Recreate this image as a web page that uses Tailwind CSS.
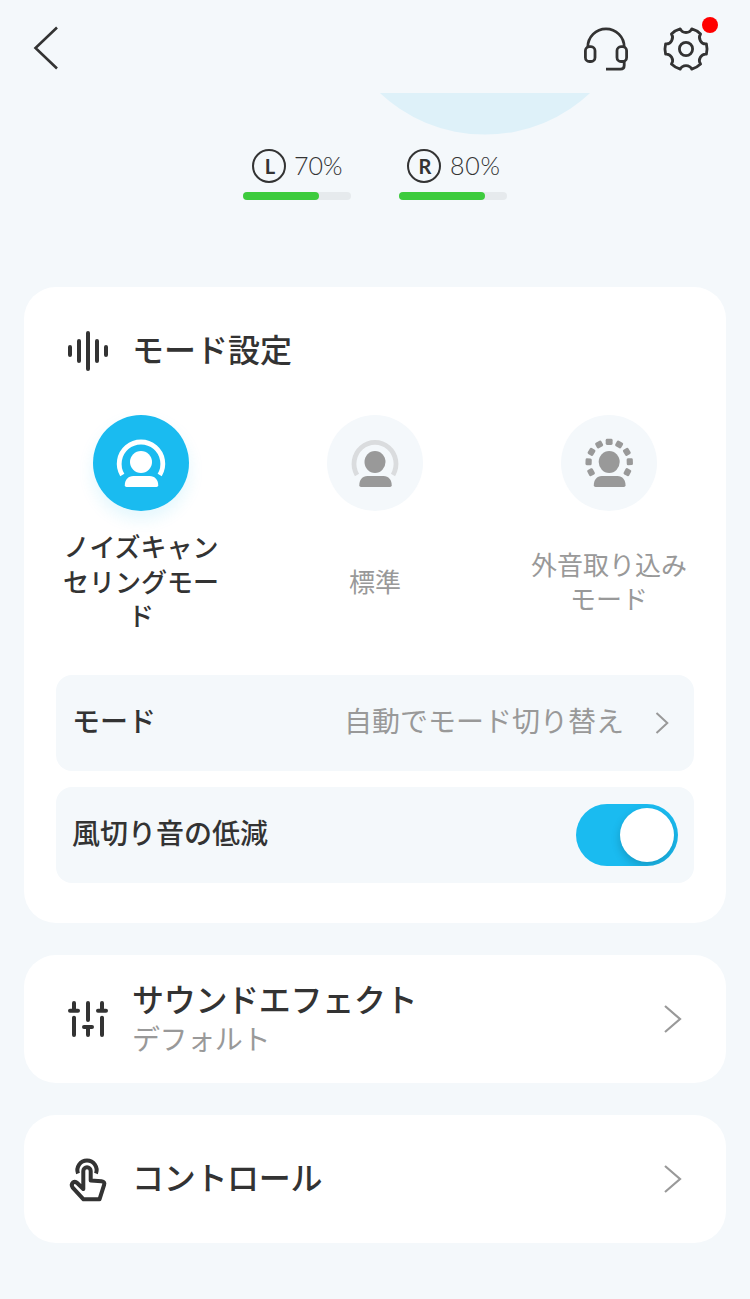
<!DOCTYPE html>
<html lang="ja">
<head>
<meta charset="utf-8">
<title>モード設定</title>
<script src="https://cdn.jsdelivr.net/npm/@tailwindcss/browser@4"></script>
</head>
<body class="bg-[#f4f8fb] font-['Noto_Sans_CJK_JP',sans-serif] text-[#333333]">
<div class="flex h-[1299px] w-[750px] flex-col overflow-hidden">
  <header class="flex h-[93px] shrink-0 items-start justify-between pr-7 pl-6">
    <svg class="h-[93px] w-12" viewBox="24 0 48 93" fill="none" stroke="#333" stroke-width="2.6"><path d="M57 27.5 35.5 48 57 68.5"/></svg>
    <div class="flex">
      <svg class="h-[93px] w-[60px]" viewBox="576 0 60 93" fill="none" stroke="#333" stroke-width="2.8">
        <path d="M587.8 47A18.2 18.2 0 0 1 624.2 47M624.2 61V65.5Q624.2 69.2 620.5 69.2H606"/>
        <rect x="585.4" y="46.7" width="9.6" height="14.8" rx="4"/><rect x="617" y="46.7" width="9.6" height="14.8" rx="4"/>
      </svg>
      <svg class="h-[93px] w-[86px]" viewBox="636 0 86 93" fill="none" stroke="#333" stroke-width="2.8">
        <g transform="translate(686 49)" stroke-linejoin="round">
          <path d="M-5.8-20.2C-3.6-15.3 3.6-15.3 5.8-20.2A21 21 0 0 1 14.6-15.1C11.5-10.8 15.1-4.5 20.4-5.1A21 21 0 0 1 20.4 5.1C15.1 4.500 11.5 10.8 14.6 15.1A21 21 0 0 1 5.8 20.2C3.6 15.3-3.6 15.3-5.8 20.2A21 21 0 0 1-14.6 15.1C-11.5 10.8-15.1 4.500-20.4 5.1A21 21 0 0 1-20.4-5.1C-15.1-4.500-11.5-10.8-14.6-15.1A21 21 0 0 1-5.8-20.2Z"/>
          <circle r="6.6"/>
        </g>
        <circle cx="710" cy="25" r="8" fill="#f00" stroke="none"/>
      </svg>
    </div>
  </header>

  <section class="h-[194px] shrink-0">
    <svg class="block h-[50px] w-full" viewBox="0 93 750 50"><circle cx="485" cy="-19" r="153.6" fill="#def1f9"/></svg>
    <div class="flex gap-12 pl-[243px]">
      <div class="w-[108px]">
        <div class="flex h-[49px] items-center gap-2 pb-[3px] pl-[9px]">
          <span class="flex size-[34px] items-center justify-center rounded-full border-2 border-[#333] pl-0.5 font-['Lato',sans-serif] text-[20px] font-bold">L</span>
          <span class="font-['Lato',sans-serif] text-[25px] font-light">70%</span>
        </div>
        <div class="h-2 rounded-full bg-[#e6eaed]"><div class="h-2 rounded-full bg-[#3dcb3d]" style="width:70%"></div></div>
      </div>
      <div class="w-[108px]">
        <div class="flex h-[49px] items-center gap-[9px] pb-[3px] pl-2">
          <span class="flex size-[34px] items-center justify-center rounded-full border-2 border-[#333] pl-0.5 font-['Lato',sans-serif] text-[20px] font-bold">R</span>
          <span class="font-['Lato',sans-serif] text-[25px] font-light tracking-[0.8px]">80%</span>
        </div>
        <div class="h-2 rounded-full bg-[#e6eaed]"><div class="h-2 rounded-full bg-[#3dcb3d]" style="width:80%"></div></div>
      </div>
    </div>
  </section>

  <main class="flex flex-col gap-8 px-6">
    <section class="h-[636px] rounded-[32px] bg-white px-8 pt-9">
      <div class="flex h-14 items-center gap-6 pl-3">
        <svg class="h-10 w-10" viewBox="68 331 40 40" stroke="#333" stroke-width="4" stroke-linecap="round"><path d="M70 347V355M79 341V361M88 333V369M97 341V361M106 347V355"/></svg>
        <h1 class="pb-1.5 text-[32px] leading-[48px] font-medium">モード設定</h1>
      </div>
      <div class="mt-9 flex justify-between">
        <div class="flex w-[170px] flex-col items-center">
          <div class="size-24 rounded-full bg-[#1abbf0] shadow-[0_8px_16px_rgba(26,187,240,0.12)]">
            <svg class="size-24" viewBox="93 415 96 96" fill="#fff"><path d="M122.300 475A21.800 21.800 0 1 1 159.700 475" fill="none" stroke="#fff" stroke-width="4.800"/><circle cx="141" cy="462" r="11"/><path d="M126.500 487Q124.800 487 124.800 485.200C124.800 480 128 476 133.500 476H149.500C155 476 158.200 480 158.200 485.200Q158.200 487 156.500 487Z"/></svg>
          </div>
          <div class="mt-[17px] flex h-[106px] w-[156px] items-center justify-center text-center text-[26px] leading-[34.500px] font-medium"><span>ノイズキャン<br>セリングモー<br>ド</span></div>
        </div>
        <div class="flex w-[170px] flex-col items-center">
          <div class="size-24 rounded-full bg-[#f4f8fb]">
            <svg class="size-24" viewBox="327 415 96 96" fill="#999"><path d="M357 475A21 21.500 0 1 1 393 475" fill="none" stroke="#dadcde" stroke-width="4.800"/><ellipse cx="375" cy="462" rx="10.500" ry="11"/><path d="M361 487Q359.300 487 359.300 485.200C359.300 480 362.300 476 367.500 476H383.500C388.700 476 391.700 480 391.700 485.200Q391.700 487 390 487Z"/></svg>
          </div>
          <div class="mt-[17px] flex h-[106px] items-center justify-center text-center text-[26px] leading-[34px] text-[#999]">標準</div>
        </div>
        <div class="flex w-[170px] flex-col items-center">
          <div class="size-24 rounded-full bg-[#f4f8fb]">
            <svg class="size-24" viewBox="561 415 96 96" fill="#999">
              <ellipse cx="609.200" cy="462" rx="10.500" ry="11"/><path d="M595.500 487Q593.800 487 593.800 485.200C593.800 480 596.800 476 601.800 476H617.500C622.500 476 625.500 480 625.500 485.200Q625.500 487 623.800 487Z"/>
              <rect x="605.700" y="438.800" width="6.900" height="6.200" rx="1.400"/>
              <rect x="605.700" y="438.800" width="6.900" height="6.200" rx="1.400" transform="rotate(29 609.200 462.500)"/>
              <rect x="605.700" y="438.800" width="6.900" height="6.200" rx="1.400" transform="rotate(-29 609.200 462.500)"/>
              <rect x="605.700" y="438.800" width="6.900" height="6.200" rx="1.400" transform="rotate(59 609.200 462.500)"/>
              <rect x="605.700" y="438.800" width="6.900" height="6.200" rx="1.400" transform="rotate(-59 609.200 462.500)"/>
              <rect x="605.700" y="438.800" width="6.900" height="6.200" rx="1.400" transform="rotate(88 609.200 462.500)"/>
              <rect x="605.700" y="438.800" width="6.900" height="6.200" rx="1.400" transform="rotate(-88 609.200 462.500)"/>
              <rect x="605.700" y="438.800" width="6.900" height="6.200" rx="1.400" transform="rotate(118 609.200 462.500)"/>
              <rect x="605.700" y="438.800" width="6.900" height="6.200" rx="1.400" transform="rotate(-118 609.200 462.500)"/>
            </svg>
          </div>
          <div class="mt-[17px] flex h-[106px] items-center justify-center text-center text-[26px] leading-[34px] text-[#999]"><span>外音取り込み<br>モード</span></div>
        </div>
      </div>
      <div class="mt-[41px] flex h-24 items-center rounded-2xl bg-[#f4f8fb] pr-6 pl-4">
        <span class="grow pb-1.5 text-[28px] font-medium">モード</span>
        <span class="pb-1.5 text-[28px] text-[#999]">自動でモード切り替え</span>
        <svg class="ml-7 h-6 w-[18px]" viewBox="652 711 18 24" fill="none" stroke="#999" stroke-width="2"><path d="M656.500 713 667.300 723 656.500 733"/></svg>
      </div>
      <div class="mt-4 flex h-24 items-center justify-between rounded-2xl bg-[#f4f8fb] px-4">
        <span class="pb-1.5 text-[28px] font-medium">風切り音の低減</span>
        <div class="flex h-[62px] w-[102px] items-center justify-end overflow-hidden rounded-full bg-[#1abbf0] pr-1"><div class="size-[54px] rounded-full bg-white shadow-[0_4px_10px_rgba(0,0,0,0.18)]"></div></div>
      </div>
    </section>

    <section class="flex h-32 items-center rounded-[32px] bg-white pr-11 pl-[42px]">
      <svg class="h-11 w-11 shrink-0" viewBox="66 997 44 44" fill="none" stroke="#333" stroke-width="4" stroke-linecap="round"><path d="M74 1003V1010.700M70 1010.700H78M74 1017.700V1035M88 1003V1020M84 1027H92M88 1027V1035M102 1003V1010.700M98 1010.700H106M102 1017.700V1035"/></svg>
      <div class="ml-[22px] grow pb-1.5">
        <h2 class="text-[32px] leading-[44px] font-medium tracking-[-0.3px]">サウンドエフェクト</h2>
        <p class="text-[28px] leading-9 tracking-[-0.4px] text-[#999]">デフォルト</p>
      </div>
      <svg class="h-8 w-5" viewBox="662 1003 20 32" fill="none" stroke="#999" stroke-width="2.200"><path d="M665 1006 680 1019 665 1032"/></svg>
    </section>

    <section class="flex h-32 items-center rounded-[32px] bg-white pr-11 pl-[42px]">
      <svg class="h-12 w-11 shrink-0" viewBox="66 1155 44 48" fill="none" stroke="#333" stroke-width="4" stroke-linejoin="round"><path d="M78 1173.500A9.600 9.600 0 1 1 96 1173.500"/><path d="M83.300 1189V1171A3.700 3.700 0 0 1 90.700 1171V1180.500L101.500 1181.300Q105.300 1181.800 104.100 1184.800L99.500 1199.300H83.500L72.500 1187.300Q70.800 1184.600 73 1182.500Q75.200 1181 77.200 1183Z"/></svg>
      <h2 class="ml-[22px] grow pb-1.5 text-[32px] leading-[48px] font-medium tracking-[-0.3px]">コントロール</h2>
      <svg class="h-8 w-5" viewBox="662 1003 20 32" fill="none" stroke="#999" stroke-width="2.200"><path d="M665 1006 680 1019 665 1032"/></svg>
    </section>
  </main>
</div>
</body>
</html>
